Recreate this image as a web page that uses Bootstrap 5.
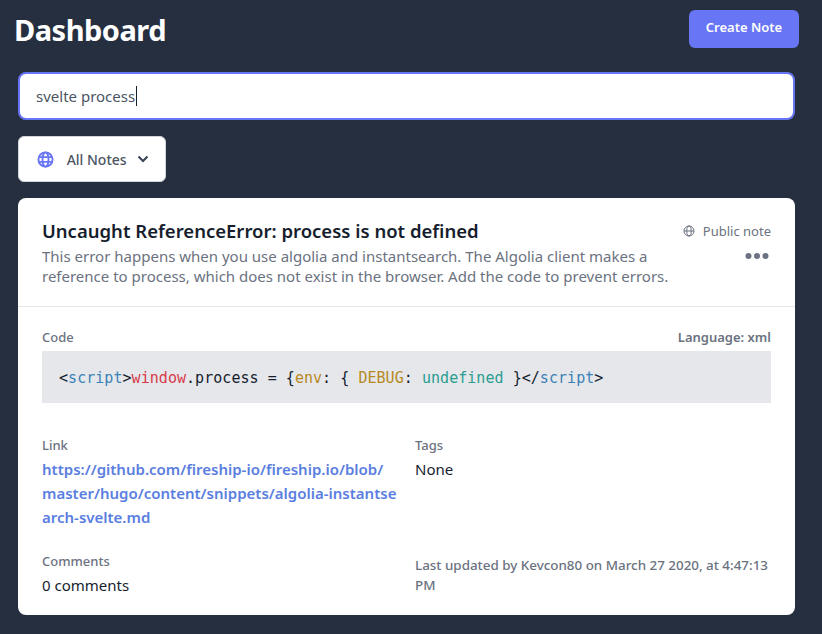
<!DOCTYPE html>
<html lang="en"><head><meta charset="utf-8"><title>Dashboard</title>
<link href="https://cdn.jsdelivr.net/npm/bootstrap@5.3.0/dist/css/bootstrap.min.css" rel="stylesheet">
<style>
html,body{height:100%}
body{background:#252f3f;font-family:"Noto Sans","Open Sans",sans-serif;color:#161e2e;overflow:hidden}
.page-wrap{padding:10px 27px 0 18px}
.top-bar{height:38px;margin-bottom:24px}
.dash-title{font-size:29px;line-height:38px;font-weight:700;color:#fff;margin:0 0 0 -4px;padding-top:2px;letter-spacing:-.5px}
.create-btn{background:#6875f5;color:#fff;border:0;border-radius:6px;width:110px;height:38px;font-size:13px;font-weight:600;padding:0 0 2px;margin-right:-4px}
.search-box{height:48px;border:2px solid #6875f5;border-radius:8px;background:#fff;padding:0 16px;font-size:15px;color:#4b5563;margin-bottom:16px}
.caret-bar{display:inline-block;width:1px;height:20px;background:#161e2e;margin-left:1px}
.filter-btn{width:148px;height:46px;background:#fff;border:1px solid #d2d6dc;border-radius:6px;font-size:14px;font-weight:500;color:#4b5563;padding:0 0 0 18px;margin-bottom:16px}
.filter-text{margin-left:9px}
.filter-chev{margin-left:10px}
.note-box{background:#fff;border-radius:8px;height:417px}
.note-head{height:109px;border-bottom:1px solid #e5e7eb;padding:21px 24px 0 24px}
.note-title{font-size:18.5px;line-height:24px;font-weight:600;margin:0 0 3px}
.note-desc{font-size:15px;line-height:20px;color:#6b7280;margin:0;width:640px}
.pub-label{font-size:13px;line-height:20px;color:#6b7280;white-space:nowrap;margin-top:2px}
.more-dots{margin:10px 2px 0 0;height:10px}
.note-body{padding:21px 24px 0}
.field-label{font-size:13px;line-height:18px;font-weight:500;color:#6b7280}
.code-box{height:52px;background:#e5e7eb;padding:0 17px;margin-top:5px;font-family:"DejaVu Sans Mono","Liberation Mono",monospace;font-size:15px;letter-spacing:.04px;line-height:54px;color:#161e2e;white-space:pre}
.c-blue{color:#3b82b6}.c-red{color:#d73a49}.c-gold{color:#b7891f}.c-teal{color:#2a9d8f}
.info-row{display:grid;grid-template-columns:373px 1fr;margin-top:33px}
.field-value{font-size:15px;line-height:24px;margin-top:3px}
.note-link{color:#5a7ee0;font-weight:600;text-decoration:none;font-size:15px;line-height:24px;display:block;white-space:nowrap;width:352px;margin-top:3px}
.meta-row{display:grid;grid-template-columns:373px 1fr;margin-top:23px}
.updated{font-size:13.4px;line-height:20px;font-weight:500;color:#6b7280;margin-top:3px}
</style></head>
<body>
<div class="page-wrap">
  <div class="top-bar d-flex justify-content-between align-items-center">
    <h1 class="dash-title">Dashboard</h1>
    <button class="create-btn" type="button">Create Note</button>
  </div>
  <div class="search-box d-flex align-items-center"><span>svelte process</span><span class="caret-bar"></span></div>
  <button class="filter-btn d-flex align-items-center" type="button">
    <svg width="17" height="17" viewBox="0 0 18 18" fill="none" stroke="#6875f5" stroke-width="2"><circle cx="9" cy="9" r="7.500"/><ellipse cx="9" cy="9" rx="3.200" ry="7.500"/><path d="M2 6.500h14M2 11.500h14"/></svg>
    <span class="filter-text">&nbsp;All Notes</span>
    <svg class="filter-chev" width="12" height="12" viewBox="0 0 12 12" fill="none" stroke="#374151" stroke-width="2"><path d="M1.500 3.500 6 8l4.500-4.500"/></svg>
  </button>
  <div class="note-box">
    <div class="note-head d-flex justify-content-between">
      <div>
        <h2 class="note-title">Uncaught ReferenceError: process is not defined</h2>
        <p class="note-desc">This error happens when you use algolia and instantsearch. The Algolia client makes a reference to process, which does not exist in the browser. Add the code to prevent errors.</p>
      </div>
      <div class="d-flex flex-column align-items-end">
        <div class="pub-label d-flex align-items-center gap-2">
          <svg width="12" height="12" viewBox="0 0 12 12" fill="none" stroke="#6b7280" stroke-width="1"><circle cx="6" cy="6" r="5"/><ellipse cx="6" cy="6" rx="2.200" ry="5"/><path d="M1 6h10"/></svg>
          <span>Public note</span>
        </div>
        <svg class="more-dots" width="24" height="10" viewBox="0 0 24 10" fill="#6b7280"><circle cx="3.500" cy="5" r="3"/><circle cx="12" cy="5" r="3"/><circle cx="20.500" cy="5" r="3"/></svg>
      </div>
    </div>
    <div class="note-body">
      <div class="d-flex justify-content-between field-label"><span>Code</span><span class="fw-semibold">Language: xml</span></div>
      <div class="code-box">&lt;<span class="c-blue">script</span>&gt;<span class="c-red">window</span>.process = {<span class="c-gold">env</span>: { <span class="c-gold">DEBUG</span>: <span class="c-teal">undefined</span> }&lt;/<span class="c-blue">script</span>&gt;</div>
      <div class="info-row">
        <div><div class="field-label">Link</div><a class="note-link" href="#">https://github.com/fireship-io/fireship.io/blob/<br>master/hugo/content/snippets/algolia-instantse<br>arch-svelte.md</a></div>
        <div><div class="field-label">Tags</div><div class="field-value">None</div></div>
      </div>
      <div class="meta-row">
        <div><div class="field-label">Comments</div><div class="field-value">0 comments</div></div>
        <div class="updated">Last updated by Kevcon80 on March 27 2020, at 4:47:13 PM</div>
      </div>
    </div>
  </div>
</div>
</body></html>
